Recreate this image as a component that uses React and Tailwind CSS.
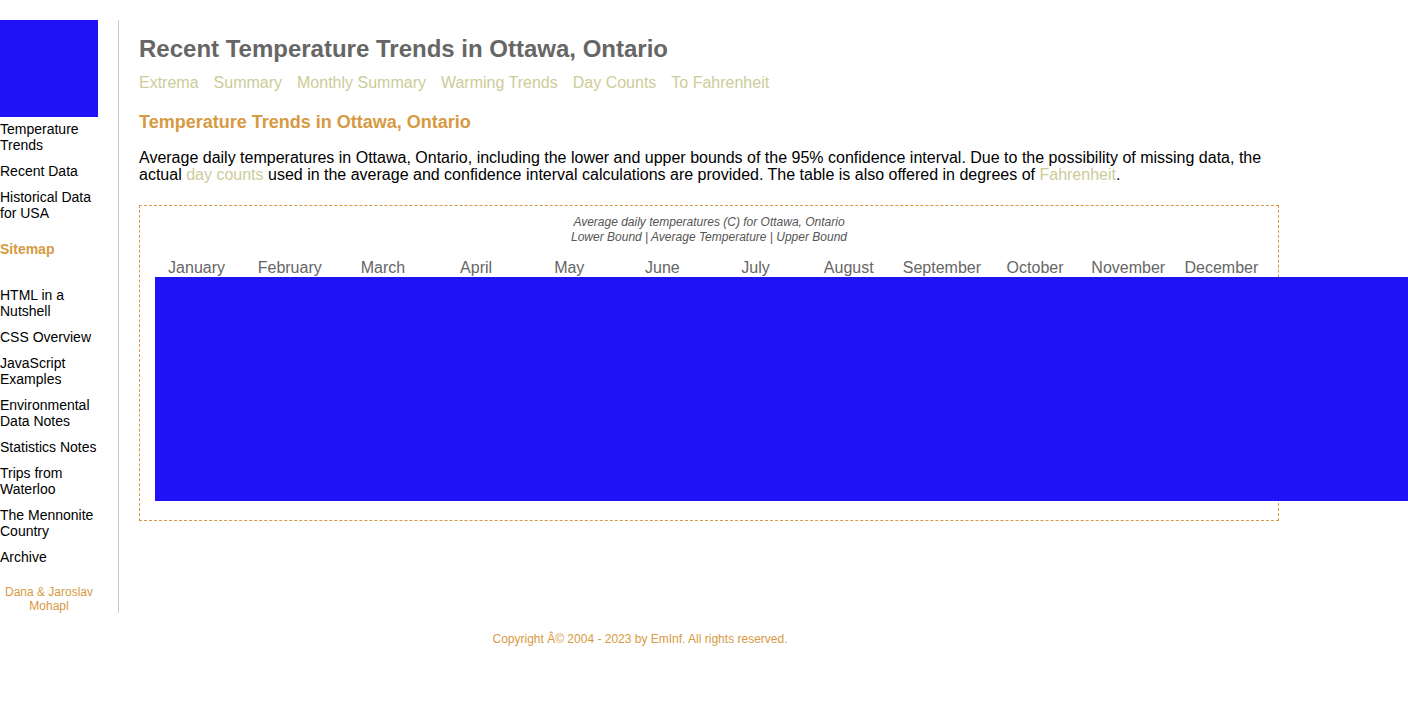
import React from "react";

const side1 = ["Temperature Trends", "Recent Data", "Historical Data for USA"];
const side2 = [
  "HTML in a Nutshell",
  "CSS Overview",
  "JavaScript Examples",
  "Environmental Data Notes",
  "Statistics Notes",
  "Trips from Waterloo",
  "The Mennonite Country",
  "Archive",
];
const navLinks = ["Extrema", "Summary", "Monthly Summary", "Warming Trends", "Day Counts", "To Fahrenheit"];
const months = ["January", "February", "March", "April", "May", "June", "July", "August", "September", "October", "November", "December"];

export default function App() {
  return (
    <div className="w-[1280px] bg-white pt-[20px] font-['Liberation_Sans',Arial,sans-serif] text-black">
      <div className="flex items-start">
        <aside className="w-[119px] shrink-0 border-r border-[#cccccc] pr-[20px]">
          <div className="h-[97px] w-[98px] bg-[#1f12f6]" />
          <ul className="mt-[4px] flex flex-col gap-[10px] text-[14px] leading-[16px]">
            {side1.map((s) => (
              <li key={s}>{s}</li>
            ))}
          </ul>
          <div className="mt-[20px] text-[14px] font-bold leading-[16px] text-[#d69a42]">Sitemap</div>
          <ul className="mt-[30px] flex flex-col gap-[10px] text-[14px] leading-[16px]">
            {side2.map((s) => (
              <li key={s}>{s}</li>
            ))}
          </ul>
          <div className="mt-[20px] text-center text-[12px] leading-[14px] text-[#d69a42]">
            Dana &amp; Jaroslav
            <br />
            Mohapl
          </div>
        </aside>
        <main className="ml-[20px] w-[1140px] pt-[15px]">
          <h1 className="text-[24px] font-bold leading-[28px] text-[#666666]">
            Recent Temperature Trends in Ottawa, Ontario
          </h1>
          <nav className="mt-[11px] flex gap-[15px] text-[16px] leading-[18px] text-[#cccc99]">
            {navLinks.map((n) => (
              <span key={n}>{n}</span>
            ))}
          </nav>
          <h2 className="mt-[20px] text-[18px] font-bold leading-[20px] text-[#d69a42]">
            Temperature Trends in Ottawa, Ontario
          </h2>
          <p className="mt-[17px] pr-[10px] text-[16px] leading-[17px]">
            Average daily temperatures in Ottawa, Ontario, including the lower and upper bounds of the 95% confidence
            interval. Due to the possibility of missing data, the actual <span className="text-[#cccc99]">day counts</span>{" "}
            used in the average and confidence interval calculations are provided. The table is also offered in degrees of{" "}
            <span className="text-[#cccc99]">Fahrenheit</span>.
          </p>
          <div className="mt-[22px] border border-dashed border-[#d69a42] pt-[9px] pb-[19px]">
            <div className="text-center text-[12px] italic leading-[15px] text-[#555555]">
              Average daily temperatures (C) for Ottawa, Ontario
              <br />
              Lower Bound | Average Temperature | Upper Bound
            </div>
            <div className="mt-[14px] ml-[10px] grid w-[1118px] grid-cols-12 text-center text-[16px] leading-[18px] text-[#666666]">
              {months.map((m) => (
                <div key={m}>{m}</div>
              ))}
            </div>
            <div className="ml-[15px] h-[224px] w-[1253px] bg-[#1f12f6]" />
          </div>
        </main>
      </div>
      <footer className="mt-[19px] text-center text-[12px] leading-[14px] text-[#d69a42]">
        Copyright Â© 2004 - 2023 by EmInf. All rights reserved.
      </footer>
    </div>
  );
}
